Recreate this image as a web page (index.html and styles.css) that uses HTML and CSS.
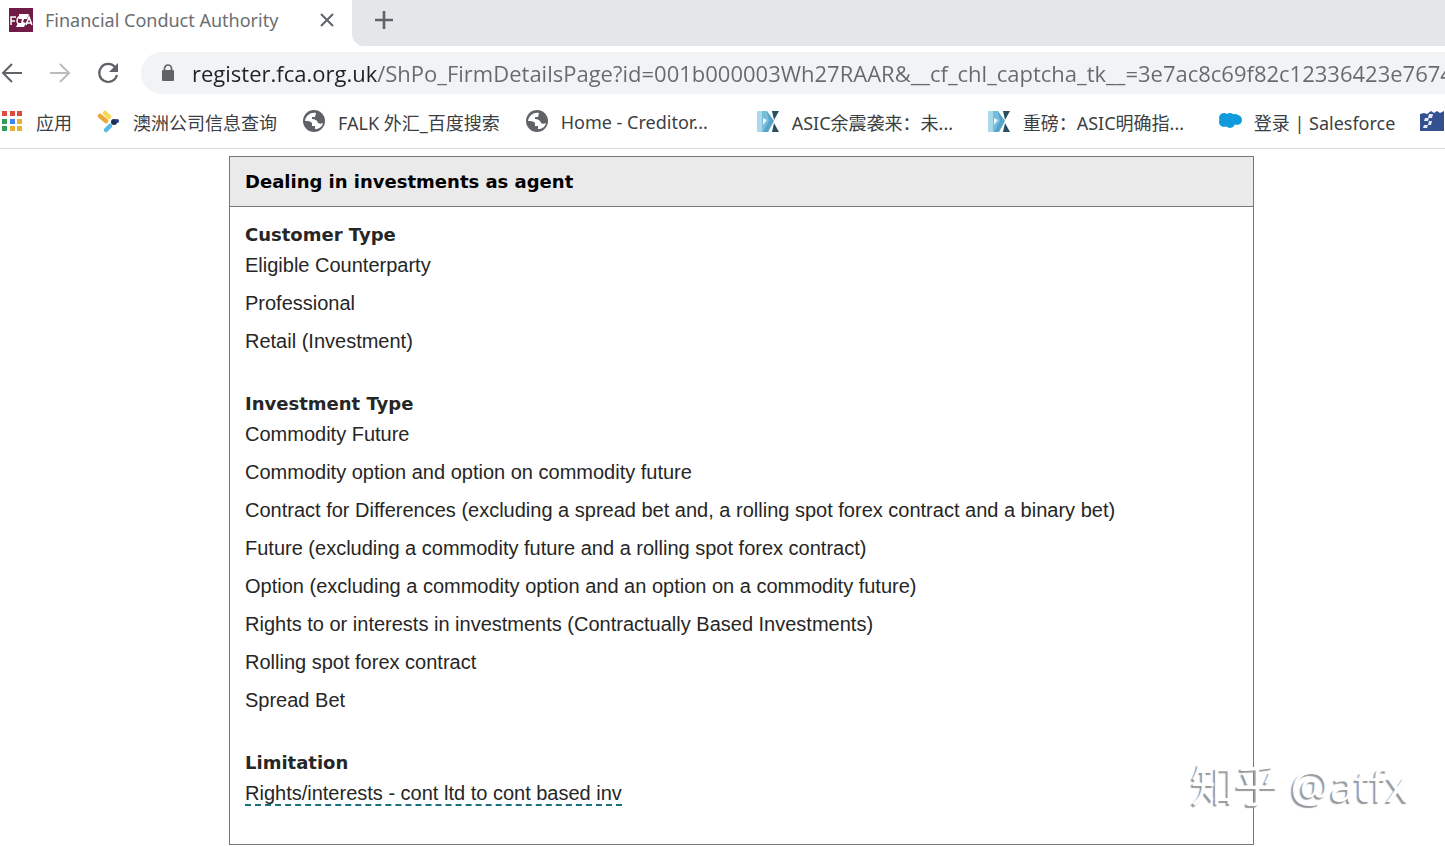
FILE: index.html
```html
<!DOCTYPE html>
<html lang="en">
<head>
<meta charset="utf-8">
<title>Financial Conduct Authority</title>
<link rel="stylesheet" href="styles.css">
</head>
<body>
<header class="browser">
  <div class="tabs">
    <div class="tab">
      <svg class="favicon" viewBox="0 0 24 24" aria-hidden="true"><rect width="24" height="24" fill="#701b45"/><path d="M2 17V9h5M2 13h4M15 9c-5-2-7 1-7 4s3 4 6 3M17 17l3-8 3 8M18 15h4" fill="none" stroke="#fff" stroke-width="1.5"/><path d="M10 6h10l-2 5h-3l-1 3 3 1-2 4H7l2-4h3l1-4h-3z" fill="#fff"/></svg>
      <span class="tab-title">Financial Conduct Authority</span>
      <button class="icon-button" type="button" aria-label="Close tab"><svg width="14" height="14" viewBox="0 0 14 14"><path d="M1 1l12 12M13 1L1 13" stroke="#5f6368" stroke-width="2" fill="none"/></svg></button>
    </div>
    <div class="tab-rest"><button class="icon-button" type="button" aria-label="New tab"><svg width="20" height="20" viewBox="0 0 20 20"><path d="M10 1v18M1 10h18" stroke="#5f6368" stroke-width="2.6" fill="none"/></svg></button></div>
  </div>
  <div class="toolbar">
    <nav class="nav-buttons">
      <button class="icon-button" type="button" aria-label="Back"><svg width="24" height="24" viewBox="0 0 24 24"><path d="M22 12H4M12 3l-9 9 9 9" stroke="#5f6368" stroke-width="2" fill="none"/></svg></button>
      <button class="icon-button" type="button" aria-label="Forward"><svg width="24" height="24" viewBox="0 0 24 24"><path d="M2 12h18M12 3l9 9-9 9" stroke="#babcbe" stroke-width="2" fill="none"/></svg></button>
      <button class="icon-button" type="button" aria-label="Reload"><svg width="24" height="24" viewBox="0 0 24 24"><path d="M19 6a9 9 0 1 0 2 8" stroke="#5f6368" stroke-width="2.2" fill="none"/><path d="M22 2v9h-9z" fill="#5f6368"/></svg></button>
    </nav>
    <div class="address">
      <svg width="14" height="18" viewBox="0 0 14 18" aria-hidden="true"><path d="M3.500 8V4.500a3.500 3.500 0 0 1 7 0V8" stroke="#5f6368" stroke-width="1.700" fill="none"/><rect x="1" y="6" width="12" height="11" rx="1" fill="#5f6368"/></svg>
      <input class="url" type="text" aria-label="Address" value="register.fca.org.uk/ShPo_FirmDetailsPage?id=001b000003Wh27RAAR&amp;__cf_chl_captcha_tk__=3e7ac8c69f82c12336423e76747">
    </div>
  </div>
  <nav class="bookmarks">
    <a href="#"><svg viewBox="0 0 24 24"><path d="M2 1h5v5H2zM10 1h5v5h-5zM17 1h5v5h-5z" fill="#dd4b3e"/><path d="M2 9h5v5H2zM2 16h5v5H2z" fill="#2f9d58"/><path d="M10 9h5v5h-5z" fill="#4285f4"/><path d="M17 9h5v5h-5zM10 16h5v5h-5zM17 16h5v5h-5z" fill="#e8af32"/></svg><span>应用</span></a>
    <a href="#"><svg viewBox="0 0 24 24"><g fill="none" stroke-width="4.500" stroke-linecap="round"><path d="M8 3l4 4" stroke="#f9d94d"/><path d="M3 6l6 5" stroke="#eda83a"/><path d="M9 20l4-4" stroke="#55b9e3"/></g><circle cx="17" cy="12" r="3" fill="#1c2d52"/><circle cx="20" cy="11" r="2" fill="#1c3d82"/></svg><span>澳洲公司信息查询</span></a>
    <a href="#"><svg viewBox="0 0 24 24"><circle cx="12" cy="11" r="11" fill="#5f6368"/><path d="M14 3c-5-1-10 2-11 8 3 0 5 0 7 2v3h3v3c4 0 7-2 8-6-2 1-3 1-5 0-1-3-3-4-6-4V7h3z" fill="#fff"/></svg><span>FALK 外汇_百度搜索</span></a>
    <a href="#"><svg viewBox="0 0 24 24"><circle cx="12" cy="11" r="11" fill="#5f6368"/><path d="M14 3c-5-1-10 2-11 8 3 0 5 0 7 2v3h3v3c4 0 7-2 8-6-2 1-3 1-5 0-1-3-3-4-6-4V7h3z" fill="#fff"/></svg><span class="clipped">Home - Creditor...</span></a>
    <a href="#"><svg viewBox="0 0 24 24"><path d="M1 1h10l4 7-3 14H1z" fill="#76bcd9"/><path d="M1 1h5v21H1z" fill="#a9d9eb"/><path d="M7 8l4 2-4 5z" fill="#e9f8fc"/><path d="M16 1h7l-5 9zM18 13l5 9h-7z" fill="#294e60"/><path d="M11 1l7 10-6 11H7l6-11z" fill="#55a4c9"/></svg><span class="clipped">ASIC余震袭来：未...</span></a>
    <a href="#"><svg viewBox="0 0 24 24"><path d="M1 1h10l4 7-3 14H1z" fill="#76bcd9"/><path d="M1 1h5v21H1z" fill="#a9d9eb"/><path d="M7 8l4 2-4 5z" fill="#e9f8fc"/><path d="M16 1h7l-5 9zM18 13l5 9h-7z" fill="#294e60"/><path d="M11 1l7 10-6 11H7l6-11z" fill="#55a4c9"/></svg><span class="clipped">重磅：ASIC明确指...</span></a>
    <a href="#"><svg viewBox="0 0 24 24"><g fill="#109cdc"><circle cx="6" cy="8" r="5"/><circle cx="12" cy="8" r="5"/><circle cx="17" cy="8" r="4"/><circle cx="19" cy="10" r="5"/><circle cx="6" cy="12" r="5"/><circle cx="12" cy="13" r="5"/></g></svg><span>登录 | Salesforce</span></a>
    <a href="#" aria-label="Bookmark"><svg viewBox="0 0 24 24"><path d="M0 4l4-1 3 1 4-3 3 2 3-2 3 2 4-2v20H0z" fill="#33508f"/><path d="M9 4h4l-1 4H8zM5 8h4l-1 3H4zM9 11h3l-1 4H8zM4 15h4l-1 3H3z" fill="#e3e9f4"/></svg></a>
  </nav>
</header>
<main class="page">
  <section class="permission">
    <h1>Dealing in investments as agent</h1>
    <div class="details">
      <section>
        <h2>Customer Type</h2>
        <ul><li>Eligible Counterparty</li><li>Professional</li><li>Retail (Investment)</li></ul>
      </section>
      <section>
        <h2>Investment Type</h2>
        <ul>
          <li>Commodity Future</li>
          <li>Commodity option and option on commodity future</li>
          <li>Contract for Differences (excluding a spread bet and, a rolling spot forex contract and a binary bet)</li>
          <li>Future (excluding a commodity future and a rolling spot forex contract)</li>
          <li>Option (excluding a commodity option and an option on a commodity future)</li>
          <li>Rights to or interests in investments (Contractually Based Investments)</li>
          <li>Rolling spot forex contract</li>
          <li>Spread Bet</li>
        </ul>
      </section>
      <section>
        <h2>Limitation</h2>
        <ul><li><a class="term" href="#">Rights/interests - cont ltd to cont based inv</a></li></ul>
      </section>
    </div>
  </section>
  <div class="watermark">知乎 @atfx</div>
</main>
</body>
</html>
```
FILE: styles.css
```css
* { box-sizing: border-box; }
body { margin: 0; background: #fff; color: #262626; font-family: "Liberation Sans", Arial, sans-serif; overflow-x: hidden; }
svg { display: block; flex: none; }
a { color: inherit; text-decoration: none; }

.browser { font-family: "Noto Sans", "Noto Sans CJK SC", sans-serif; border-bottom: 1px solid #dadce0; overflow: hidden; }
.icon-button { display: flex; padding: 0; border: 0; background: none; }
.tabs { display: flex; height: 46px; background: #fff; }
.tab { display: flex; align-items: center; flex: none; width: 352px; padding: 0 18px 6px 9px; }
.favicon { width: 24px; height: 24px; }
.tab-title { flex: 1; margin-left: 12px; color: #6c6e71; font-size: 18px; white-space: nowrap; }
.tab-rest { flex: 1; display: flex; align-items: center; padding: 0 22px 6px; background: #e4e7ea; border-bottom-left-radius: 12px; }

.toolbar { display: flex; align-items: center; height: 54px; }
.nav-buttons { display: flex; gap: 24px; width: 141px; flex: none; }
.address { display: flex; align-items: center; flex: 1; min-width: 0; gap: 17px; height: 42px; padding-left: 20px; background: #f1f3f4; border-radius: 21px 0 0 21px; }
.url { flex: 1; min-width: 0; height: 42px; padding: 0; border: 0; outline: 0; font: 22px "Open Sans", sans-serif; color: transparent; background: linear-gradient(90deg, #202124 185px, #66696d 185px); background-clip: text; -webkit-background-clip: text; }

.bookmarks { display: flex; gap: 25px; height: 48px; padding-bottom: 4px; color: #3c4043; font-size: 18px; white-space: nowrap; }
.bookmarks a { display: flex; align-items: center; flex: none; gap: 12px; }
.bookmarks svg { width: 24px; height: 24px; }
.clipped { width: 170px; }

.page { position: relative; padding: 7px 191px 2px 229px; }
.permission { border: 1px solid #777; }
h1, h2 { margin: 0; font-family: "DejaVu Sans", Verdana, sans-serif; font-weight: 700; font-size: 18px; }
h1 { padding: 0 15px; line-height: 49px; color: #000; background: #eaeaea; border-bottom: 1px solid #777; }
.details { display: grid; gap: 32px; padding: 16px 15px 32px; }
h2 { line-height: 23px; }
ul { margin: 0; padding: 0; list-style: none; font-size: 20px; }
li { line-height: 38px; }
.term { border-bottom: 2px dashed #17707a; }
.watermark { position: absolute; right: 36px; bottom: 32px; font: 400 44px/60px "Noto Sans", "Noto Sans CJK SC", sans-serif; color: #fff; text-shadow: -2px 2px 1px #999; }
```
